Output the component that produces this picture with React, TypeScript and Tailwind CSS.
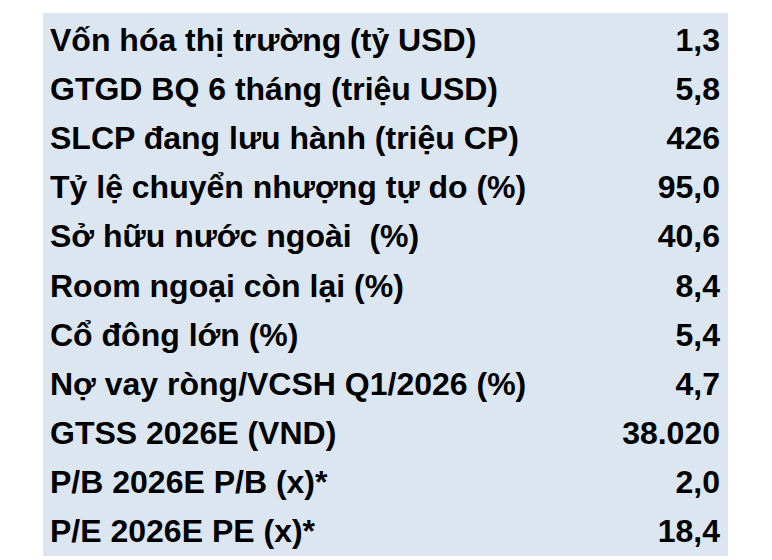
const rows: [string, string][] = [
  ["Vốn hóa thị trường (tỷ USD)", "1,3"],
  ["GTGD BQ 6 tháng (triệu USD)", "5,8"],
  ["SLCP đang lưu hành (triệu CP)", "426"],
  ["Tỷ lệ chuyển nhượng tự do (%)", "95,0"],
  ["Sở hữu nước ngoài  (%)", "40,6"],
  ["Room ngoại còn lại (%)", "8,4"],
  ["Cổ đông lớn (%)", "5,4"],
  ["Nợ vay ròng/VCSH Q1/2026 (%)", "4,7"],
  ["GTSS 2026E (VND)", "38.020"],
  ["P/B 2026E P/B (x)*", "2,0"],
  ["P/E 2026E PE (x)*", "18,4"],
];

export default function App() {
  return (
    <div className="w-[772px] h-[560px] bg-white pt-[13px] pl-[43px]">
      <div
        className="w-[685px] h-[543px] bg-[#dce6f1] pl-[7px] pr-[8px] pt-[2px] flex flex-col text-black font-bold"
        style={{ fontFamily: '"Liberation Sans", Arial, sans-serif' }}
      >
        {rows.map(([label, value], i) => (
          <div key={i} className="flex justify-between items-center h-[49.2px] text-[32px] leading-none whitespace-pre">
            <span>{label}</span>
            <span>{value}</span>
          </div>
        ))}
      </div>
    </div>
  );
}
